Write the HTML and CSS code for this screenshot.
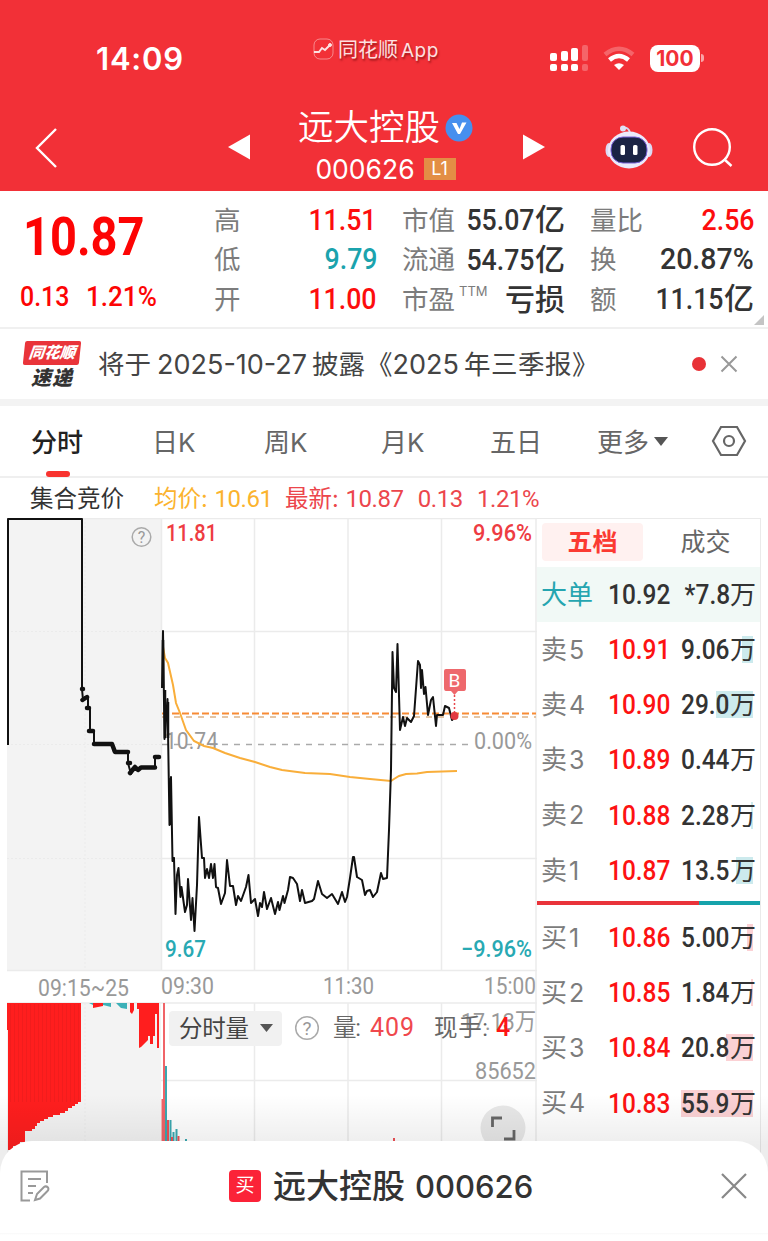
FILE: index.html
```html
<!DOCTYPE html>
<html lang="zh-CN">

<head>
    <meta charset="UTF-8">
    <title>远大控股 000626</title>
    <link rel="stylesheet" href="styles.css">
</head>

<body>
    <header class="top">
        <div class="status">
            <span class="time">14:09</span>
            <span class="mark">
                <svg width="22" height="22" viewBox="0 0 22 22" fill="none" stroke="#fff">
                    <rect x="1" y="1" width="19" height="20" rx="6" stroke-opacity=".5" />
                    <path d="M1 14 L6 14 L9 10 L12 12 L17 7" stroke-width="2" />
                    <circle cx="17" cy="7" r="1.5" fill="#fff" />
                </svg>
                同花顺<b>App</b>
            </span>
            <svg class="signal" width="38" height="28" viewBox="0 0 38 28" fill="#fff">
                <rect x="0" y="9" width="7" height="8" rx="2" />
                <rect x="11" y="7" width="7" height="10" rx="2" />
                <rect x="21" y="4" width="7" height="13" rx="2" />
                <rect x="32" y="1" width="6" height="16" rx="2" opacity=".25" />
                <rect x="0" y="20" width="7" height="7" rx="2" />
                <rect x="11" y="20" width="7" height="7" rx="2" />
                <rect x="21" y="20" width="7" height="7" rx="2" />
                <rect x="32" y="20" width="6" height="7" rx="2" opacity=".25" />
            </svg>
            <svg class="wifi" width="32" height="25" viewBox="0 0 32 25" fill="none" stroke="#fff" stroke-width="4.5">
                <path d="M2 8.5 Q16 -3 30 8.500" opacity=".25" />
                <path d="M6.500 14 Q16 6 25.500 14" />
                <path d="M16 24 L11 19 Q16 15.500 21 19 Z" fill="#fff" stroke="none" />
            </svg>
            <span class="battery">100</span>
            <i class="battery-tip"></i>
        </div>
        <div class="nav">
            <svg class="back" width="22" height="40" viewBox="0 0 22 40" fill="none" stroke="#fff" stroke-width="2.400">
                <path d="M21 1 L2 20 L21 39" />
            </svg>
            <svg class="prev" width="22" height="26" viewBox="0 0 22 26" fill="#fff">
                <path d="M0 13 L22 0.500 V25.500 Z" />
            </svg>
            <div class="title">
                <div class="name">远大控股
                    <svg width="28" height="28" viewBox="0 0 28 28">
                        <circle cx="14" cy="14" r="13.500" fill="#468fee" />
                        <path d="M7 9 H11.500 L14.500 15 L17 8.500 H21.500 L15 20 H13 Z" fill="#fff" />
                    </svg>
                </div>
                <div class="code">000626<span class="level">L1</span></div>
            </div>
            <svg class="next" width="22" height="26" viewBox="0 0 22 26" fill="#fff">
                <path d="M22 13 L0 0.500 V25.500 Z" />
            </svg>
            <svg class="robot" width="48" height="44" viewBox="0 0 48 44">
                <path d="M18 3 Q24 2 25 8" fill="none" stroke="#d9d8ee" stroke-width="2" />
                <circle cx="18" cy="3.500" r="3" fill="#dfe2f5" />
                <ellipse cx="4" cy="25" rx="3.500" ry="7" fill="#dcdaf4" />
                <ellipse cx="44" cy="25" rx="3.500" ry="7" fill="#dcdaf4" />
                <ellipse cx="24" cy="25" rx="21" ry="18.500" fill="#eceafb" />
                <rect x="6" y="12" width="36" height="26" rx="12" fill="#1b2344" stroke="#7a62d8" stroke-width="1" />
                <rect x="15.500" y="20" width="4.500" height="10" rx="1.500" fill="#fff" />
                <rect x="28" y="20" width="4.500" height="10" rx="1.500" fill="#fff" />
            </svg>
            <svg class="search" width="40" height="40" viewBox="0 0 40 40" fill="none" stroke="#fff" stroke-width="2.400">
                <circle cx="19" cy="19" r="17.800" />
                <path d="M31 31 L38.500 38" />
            </svg>
        </div>
    </header>

    <section class="quote">
        <div class="last">
            <div class="price"><span class="num">10.87</span></div>
            <div class="change"><span class="num">0.13</span><span class="num">1.21%</span></div>
        </div>
        <div class="stats">
            <div class="stat"><label>高</label><span class="num red">11.51</span></div>
            <div class="stat"><label>市值</label><span class="val"><span class="num">55.07</span>亿</span></div>
            <div class="stat"><label>量比</label><span class="num red">2.56</span></div>
            <div class="stat"><label>低</label><span class="num teal">9.79</span></div>
            <div class="stat"><label>流通</label><span class="val"><span class="num">54.75</span>亿</span></div>
            <div class="stat"><label>换</label><span class="num wide">20.87%</span></div>
            <div class="stat"><label>开</label><span class="num red">11.00</span></div>
            <div class="stat"><label>市盈<sup>TTM</sup></label><span class="val loss">亏损</span></div>
            <div class="stat"><label>额</label><span class="val"><span class="num">11.15</span>亿</span></div>
        </div>
        <i class="corner"></i>
    </section>

    <section class="notice">
        <div class="logo"><span class="logo-top">同花顺</span><span class="logo-bottom">速递</span></div>
        <p>将于<b class="date">2025-10-27</b>披露<span class="open">《</span><b>2025</b><span class="year">年三季报</span>》</p>
        <i class="dot"></i>
        <svg width="18" height="18" viewBox="0 0 18 18" stroke="#999" stroke-width="2">
            <path d="M1.500 1.500 L16.500 16.500 M16.500 1.500 L1.500 16.500" />
        </svg>
    </section>

    <nav class="tabs">
        <span class="active">分时</span>
        <span>日K</span>
        <span>周K</span>
        <span>月K</span>
        <span>五日</span>
        <span>更多<i class="caret"></i></span>
        <svg width="36" height="32" viewBox="0 0 36 32" fill="none" stroke="#666" stroke-width="2.200">
            <path d="M10 2 H26 L34 16 L26 30 H10 L2 16 Z" />
            <circle cx="18" cy="16" r="5" />
        </svg>
    </nav>

    <div class="info">
        <span class="auction">集合竞价</span>
        <span class="avg">均价: <b>10.61</b></span>
        <span class="now">最新: <b>10.87</b></span>
        <span class="now"><b>0.13</b></span>
        <span class="now"><b>1.21%</b></span>
    </div>

    <main class="board">
        <svg class="chart" width="537" height="723" viewBox="0 518 537 723">
            <!-- auction background -->
            <rect x="7" y="518" width="154" height="452" fill="#f3f3f3" />
            <rect x="7" y="1003" width="154" height="150" fill="#f3f3f3" />

            <!-- grid -->
            <g stroke="#ebebeb" stroke-width="1.500" fill="none">
                <path d="M7 518.500 H537 M161 631.500 H537 M161 858.500 H537 M7 970.500 H537 M7 1003 H537 M161 1080.500 H537" />
                <path d="M161.500 518 V970 M254.500 518 V970 M348 518 V970 M441.500 518 V970 M536 518 V1153" />
                <path d="M254.500 1003 V1153 M348 1003 V1153 M441.500 1003 V1153" />
                <path d="M7 631.500 H161 M7 744.500 H161 M7 858.500 H161 M85 518 V970 M85 1003 V1153" stroke-dasharray="2 2" stroke-width="1" />
            </g>

            <!-- auction line -->
            <path class="line" d="M8 745 V519 H82 V689 L83 700 L85 697 L88 698 V708 H90 V731 H94 V744 H112 L114 752 H128 V763 L131 774 L135 767 L138 770 L140 767 H155 V757 H160" />
            <path class="line thick" d="M82 689 H83 M82.500 700 L87 697 M87 708 H89 M89 731 H93 M94 744 H112 L115 752 H128 M128 763 H130 M130 773 L135 767 L138 770 L141 767.500 H155 M155 757 H159" />

            <!-- reference levels -->
            <path d="M162 744.500 H470" stroke="#aaa" stroke-width="1.500" stroke-dasharray="6 6" />
            <path d="M162 717 H536" stroke="#dcb288" stroke-width="1.500" stroke-dasharray="6 6" />
            <path d="M162 713.500 H536" stroke="#f88b35" stroke-width="2" stroke-dasharray="7 3" />

            <text class="din grey" x="165" y="749" textLength="53" lengthAdjust="spacingAndGlyphs">10.74</text>
            <text class="din grey" x="474" y="749" textLength="58" lengthAdjust="spacingAndGlyphs">0.00%</text>

            <path d="M163 647 L165 658 L168 663 L173 685 L176 703 L180 713 L186 730 L194 741 L204 746 L213 748 L225 753 L240 758 L255 762 L270 767 L282 770 L305 773 L330 774 L350 777 L370 779 L391 781 L394 779 L399 776 L406 774 L417 773.500 L427 772 L457 771" fill="none" stroke="#f9ae3a" stroke-width="2" />
            <path class="line" d="M162 688 L163 631 L164.500 739 L167.500 699 L169.500 825 L171 777 L172.500 861 L174 858 L175.500 914 L177 875 L178.500 868 L180.500 897 L181.500 887 L185 912 L187 905 L188 879 L191 920 L192.500 898 L194.500 931 L197 885 L199 817 L202 858 L204 858 L205 878 L207 869 L209 878 L211 864 L213 878 L214.500 864 L216 887 L218 888 L221 904 L225 893 L227 860 L230 886 L233 886 L236 905 L238 896 L241 901 L246 887 L248.500 875 L251 903 L255 899 L258 916 L260 903 L262 907 L264 892 L267 909 L271 898 L275 914 L278 902 L279.500 910 L283 896 L284.500 903 L288 890 L290 877 L293 878 L297 884 L300 901 L302 890 L305 903 L312 901 L314 899 L318 881 L322 894 L327 898 L332 894 L338 904 L342 892 L345 902 L347 897 L350 878 L353 857 L354 857 L357 877 L362 880 L365 895 L367 891 L370 890 L373 897 L377 892 L381 873 L383 879 L387 878 L389 830 L391 770 L392.500 652 L394 688 L396 692 L397.500 644 L400 730 L403 717 L405 726 L407 718 L411 722 L414 716 L418 661 L420 665 L421 688 L422 670 L424 694 L425.500 687 L428 715 L431 700 L433 697 L436 726 L437 715 L443 715 L445 706 L449 708 L452 720 L455 717" />
            <path d="M163 640 V688 M165 690 V738 M168 702 V738 M170.500 778 V825" stroke="#111" stroke-width="2.500" />

            <!-- buy marker -->
            <path d="M454.500 691 V714" stroke="#e8474d" stroke-width="1.500" stroke-dasharray="2 2" />
            <path d="M446 669 H464 Q466 669 466 671 V688 Q466 691 464 691 H458 L454.500 695 L451 691 H446 Q444 691 444 688 V671 Q444 669 446 669 Z" fill="#ee686c" />
            <text x="454.500" y="687" fill="#fff" font-size="19" text-anchor="middle">B</text>
            <circle cx="454.500" cy="716" r="4" fill="#e2383f" />

            <!-- price labels -->
            <text class="din rise" x="166" y="541" textLength="51" lengthAdjust="spacingAndGlyphs">11.81</text>
            <text class="din rise" x="473" y="541" textLength="59" lengthAdjust="spacingAndGlyphs">9.96%</text>
            <text class="din fall" x="165" y="957" textLength="41" lengthAdjust="spacingAndGlyphs">9.67</text>
            <text class="din fall" x="461" y="957" textLength="71" lengthAdjust="spacingAndGlyphs">−9.96%</text>
            <g fill="none" stroke="#aaa" stroke-width="1.500">
                <circle cx="141.500" cy="537" r="9.300" />
                <circle cx="307" cy="1028" r="11.300" />
            </g>
            <text x="141.500" y="543" fill="#999" font-size="16" text-anchor="middle">?</text>
            <text x="307" y="1035" fill="#999" font-size="19" text-anchor="middle">?</text>

            <!-- time axis -->
            <text class="din axis" x="38" y="996" textLength="91" lengthAdjust="spacingAndGlyphs">09:15~25</text>
            <text class="din axis" x="161" y="994" textLength="53" lengthAdjust="spacingAndGlyphs">09:30</text>
            <text class="din axis" x="323" y="994" textLength="51" lengthAdjust="spacingAndGlyphs">11:30</text>
            <text class="din axis" x="484" y="994" textLength="52" lengthAdjust="spacingAndGlyphs">15:00</text>

            <!-- volume -->
            <path d="M7 1003 H81 V1102 H78 V1104 H75 V1106 H72 V1108 H68 V1111 H65 V1113 H60 V1115 H53 V1117 H48 V1119 H44 V1121 H40 V1123 H37 V1126 H35 V1129 H32 V1131 H25 V1142 H20 V1146 H13 V1150 H8 V1030 H7 Z" fill="#ff1e1e" />
            <path d="M10 1053 H80" stroke="#e01c1c" stroke-opacity=".45" stroke-width="98" stroke-dasharray="1 3" />
            <path d="M93 1003 H103 V1006 L93 1008 Z M130 1003 H134 V1010 L132 1014 L130 1012 Z M137 1003 H159 V1048 H157 V1014 H155 V1036 H153 V1044 H150 V1036 H148 V1040 L141 1047 L139 1048 V1009 H137 Z" fill="#ff1e1e" />
            <path d="M89 1003 H93 V1005 Z M103 1003 H111 V1007 L103 1005 Z M116 1003 H127 V1009 L121 1008 Z" fill="#3cb1b8" />
            <path d="M164 1003 V1141 M162.500 1099 V1141" stroke="#f06468" stroke-width="2" />
            <path d="M166 1066 V1141 M170.500 1120 V1141 M173.500 1132 V1141 M176.500 1129 V1141 M186 1139 V1141" stroke="#3aa8b0" stroke-width="2" />
            <path d="M168 1120 V1141 M172 1137 V1141 M178.500 1136 V1141 M394 1138 V1141" stroke="#ee5055" stroke-width="2" />

            <!-- volume legend -->
            <rect x="169" y="1011" width="113" height="35" rx="4" fill="#f1f1f1" />
            <text class="cjk" x="179" y="1037" fill="#444" textLength="70">分时量</text>
            <path d="M260 1024 H273 L266.500 1032 Z" fill="#555" />
            <text class="cjk" x="333" y="1036" fill="#666" textLength="28">量:</text>
            <text x="370" y="1036" class="count" textLength="44">409</text>
            <text class="cjk" x="461" y="1030" fill="#999" textLength="75" lengthAdjust="spacingAndGlyphs">17.13万</text>
            <text class="cjk" x="434" y="1036" fill="#666" textLength="54">现手:</text>
            <text x="496" y="1036" class="count strong">4</text>
            <text class="din axis" x="475" y="1079" textLength="61" lengthAdjust="spacingAndGlyphs">85652</text>
            <circle cx="503" cy="1128" r="22.500" fill="#e8e8e8" />
            <path d="M492.500 1127 V1118 H502 M514 1130 V1139 H504" fill="none" stroke="#666" stroke-width="2.800" />
        </svg>

        <section class="book">
            <div class="book-tabs"><span class="on">五档</span><span>成交</span></div>
            <div class="row large"><span class="side">大单</span><span class="num">10.92</span><span class="amt"><span class="num">*7.8</span>万</span></div>
            <div class="row"><span class="side">卖<b>5</b></span><span class="num">10.91</span><span class="amt"><i style="width:11px"></i><span class="num">9.06</span>万</span></div>
            <div class="row"><span class="side">卖<b>4</b></span><span class="num">10.90</span><span class="amt"><i style="width:37px"></i><span class="num">29.0</span>万</span></div>
            <div class="row"><span class="side">卖<b>3</b></span><span class="num">10.89</span><span class="amt"><span class="num">0.44</span>万</span></div>
            <div class="row"><span class="side">卖<b>2</b></span><span class="num">10.88</span><span class="amt"><i style="width:2px"></i><span class="num">2.28</span>万</span></div>
            <div class="row"><span class="side">卖<b>1</b></span><span class="num">10.87</span><span class="amt"><i style="width:17px"></i><span class="num">13.5</span>万</span></div>
            <div class="ratio"></div>
            <div class="row buy"><span class="side">买<b>1</b></span><span class="num">10.86</span><span class="amt"><i style="width:6px"></i><span class="num">5.00</span>万</span></div>
            <div class="row buy"><span class="side">买<b>2</b></span><span class="num">10.85</span><span class="amt"><i style="width:2px"></i><span class="num">1.84</span>万</span></div>
            <div class="row buy"><span class="side">买<b>3</b></span><span class="num">10.84</span><span class="amt"><i style="width:27px"></i><span class="num">20.8</span>万</span></div>
            <div class="row buy"><span class="side">买<b>4</b></span><span class="num">10.83</span><span class="amt"><i style="width:72px"></i><span class="num">55.9</span>万</span></div>
        </section>
    </main>

    <div class="fade"></div>
    <footer class="sheet">
        <svg class="note" width="30" height="32" viewBox="0 0 30 32" fill="none" stroke="#999" stroke-width="2">
            <path d="M27 13 V1.500 H1.500 V30.500 H10 M8 9 H21 M8 16 H16 M8 23 H13" />
            <path d="M15 30 L17 24 L24 17 Q26 15.500 28 17.500 Q29 19.500 27.500 21 L20 28.500 Z" />
        </svg>
        <span class="tag">买</span>
        <span class="stock">远大控股</span><b>000626</b>
        <svg class="close" width="28" height="28" viewBox="0 0 28 28" stroke="#888" stroke-width="2.200">
            <path d="M2 2 L26 26 M26 2 L2 26" />
        </svg>
    </footer>
</body>

</html>
```

FILE: styles.css
```css
* {
    box-sizing: border-box;
}

body {
    margin: 0;
    width: 768px;
    height: 1241px;
    overflow: hidden;
    position: relative;
    background: #fff;
    color: #333;
    font-family: Inter, "Noto Sans CJK SC", sans-serif;
    font-size: 26px;
    line-height: 1;
}

svg {
    display: block;
    flex: none;
}

i {
    font-style: normal;
}

/* narrow figures */
.num {
    display: inline-block;
    font-family: Roboto, sans-serif;
    font-weight: 500;
    transform: scaleX(.89);
    transform-origin: right;
}

.red {
    color: #fd0d0d;
}

.teal {
    color: #1ba3ad;
}

/* header */
.top {
    height: 191px;
    background: #f23037;
    color: #fff;
}

.status {
    height: 104px;
    padding: 12px 0 0 96px;
    display: flex;
    align-items: center;
}

.time {
    width: 217px;
    font-size: 31px;
    font-weight: 600;
    letter-spacing: .8px;
}

.mark {
    width: 237px;
    margin-top: -16px;
    display: flex;
    align-items: center;
    gap: 3px;
    font-size: 20px;
    opacity: .85;
    text-shadow: 1px 2px 2px rgba(80, 0, 0, .6);
}

.mark svg {
    margin-top: -3px;
}

.mark b {
    font-size: 19px;
    font-weight: 400;
    letter-spacing: .5px;
}

.wifi {
    margin-left: 15px;
}

.battery {
    margin-left: 15px;
    width: 50px;
    height: 27px;
    border-radius: 8px;
    background: #fff;
    color: #f23037;
    font-size: 21px;
    font-weight: 700;
    line-height: 27px;
    text-align: center;
}

.battery-tip {
    width: 3px;
    height: 8px;
    margin-left: 1px;
    border-radius: 0 3px 3px 0;
    background: #f9a5a8;
}

.nav {
    height: 87px;
    padding-left: 35px;
    display: flex;
    align-items: center;
}

.prev {
    margin-left: 171px;
    margin-top: -2px;
}

.next {
    margin-top: -2px;
}

.title {
    width: 175px;
    margin: -3px 50px 0 48px;
    display: flex;
    flex-direction: column;
    align-items: center;
    gap: 10px;
}

.name {
    display: flex;
    align-items: center;
    gap: 5px;
    font-size: 35.500px;
    font-weight: 350;
    line-height: 36px;
    white-space: nowrap;
}

.code {
    display: flex;
    align-items: center;
    gap: 9px;
    font-size: 26.500px;
}

.level {
    width: 32px;
    height: 22px;
    background: #e38e45;
    font-size: 18px;
    line-height: 22px;
    text-align: center;
}

.robot {
    margin-left: 60px;
    margin-top: -2px;
}

.search {
    margin-left: 40px;
}

/* quote */
.quote {
    position: relative;
    height: 138px;
    display: flex;
    border-bottom: 2px solid #f0f0f0;
}

.last {
    width: 214px;
    padding-top: 18px;
    color: #fd0404;
}

.last .num {
    transform-origin: left;
}

.price {
    padding-left: 23px;
    font-size: 54px;
}

.price .num {
    font-weight: 700;
    transform: scaleX(.87);
}

.change {
    display: flex;
    padding: 19px 0 0 20px;
    font-size: 28px;
}

.change .num:first-child {
    width: 66px;
}

.change .num:last-child {
    transform: scaleX(.93);
}

.stats {
    display: grid;
    grid-template-columns: 163px 163px 164px;
    grid-auto-rows: 39.500px;
    column-gap: 25px;
    padding-top: 9px;
}

.stat {
    display: flex;
    justify-content: space-between;
    align-items: center;
}

.stat label {
    color: #7c7c7c;
    font-size: 26.500px;
    font-weight: 400;
    white-space: nowrap;
}

.stat .num {
    font-size: 30px;
}

.stat .wide {
    transform: scaleX(.95);
}

.val {
    font-size: 30px;
    font-weight: 500;
    white-space: nowrap;
}

.stat sup {
    display: inline-block;
    margin-left: 4px;
    font-size: 13px;
    line-height: 1;
    vertical-align: 13px;
}

.corner {
    position: absolute;
    right: 4px;
    bottom: 2px;
    border: 5px solid;
    border-color: transparent #c4c4c4 #c4c4c4 transparent;
}

/* notice */
.notice {
    height: 70px;
    padding-left: 24px;
    display: flex;
    align-items: center;
}

.logo {
    width: 74px;
    font-style: italic;
    font-weight: 900;
}

.logo span {
    display: block;
    width: 56px;
    text-align: center;
}

.logo .logo-top {
    height: 24px;
    background: #e9343a;
    border-radius: 2px;
    color: #fff;
    font-size: 15.500px;
    line-height: 23px;
    transform: skewX(-6deg);
}

.logo .logo-bottom {
    padding-top: 3px;
    font-size: 20px;
    line-height: 20px;
    letter-spacing: 1px;
}

.notice p {
    width: 594px;
    margin: 0;
    color: #444;
    font-size: 26.500px;
    white-space: nowrap;
}

.notice p b {
    font-size: 27px;
    font-weight: 400;
}

.notice .date {
    margin: 0 5px 0 6px;
}

.notice .open {
    margin-left: 1px;
}

.notice .year {
    margin-left: 5px;
    letter-spacing: .5px;
}

.dot {
    width: 14px;
    height: 14px;
    margin-right: 14px;
    border-radius: 50%;
    background: #e83237;
}

/* period tabs */
.tabs {
    height: 79px;
    padding-left: 31px;
    border-top: 7px solid #f3f3f3;
    border-bottom: 2px solid #efefef;
    display: grid;
    grid-template-columns: 121px 112px 117px 109px 107px 114px 1fr;
    align-items: center;
    color: #666;
}

.tabs span {
    display: flex;
    align-items: center;
    height: 70px;
    padding-top: 4px;
}

.tabs .active {
    position: relative;
    color: #222;
    font-weight: 500;
}

.tabs .active::after {
    content: "";
    position: absolute;
    left: 15px;
    bottom: -1px;
    width: 24px;
    height: 6px;
    border-radius: 3px;
    background: #f8332f;
}

.caret {
    margin: -3px 0 0 5px;
    border: 7px solid transparent;
    border-top: 9px solid #555;
    border-bottom: 0;
}

.info {
    height: 40px;
    padding: 2px 0 0 30px;
    display: flex;
    align-items: center;
    font-size: 23.500px;
    white-space: nowrap;
}

.info b {
    font-family: Roboto, sans-serif;
    font-size: 24px;
    font-weight: 400;
    letter-spacing: -.4px;
}

.auction {
    width: 124px;
}

.avg {
    width: 131px;
    color: #fbb32e;
}

.now {
    margin-right: 14px;
    color: #ec464c;
}

/* chart */
.board {
    display: flex;
}

.chart {
    font-family: Roboto, "Noto Sans CJK SC", sans-serif;
}

.line {
    fill: none;
    stroke: #111;
    stroke-width: 2;
    stroke-linejoin: round;
}

.thick {
    stroke-width: 4.500;
    stroke-linecap: round;
}

.din {
    font-size: 24px;
}

.grey,
.axis {
    fill: #999;
}

.rise {
    fill: #ee3c42;
    font-weight: 500;
}

.fall {
    fill: #28a9b3;
    font-weight: 500;
}

.cjk {
    font-size: 23.500px;
}

.count {
    fill: #f0484d;
    font-size: 25px;
}

.strong {
    fill: #fd1515;
    font-weight: 500;
}

/* order book */
.book {
    width: 224px;
    height: 723px;
    border-top: 1px solid #eaeaea;
    border-right: 1px solid #eaeaea;
}

.book-tabs {
    display: flex;
    height: 48px;
    padding: 4px 0 0 5px;
    color: #666;
    font-size: 25px;
    line-height: 38px;
}

.book-tabs span {
    flex: none;
    width: 101px;
    height: 38px;
    margin-right: 12px;
    text-align: center;
}

.book-tabs .on {
    border-radius: 4px;
    background: #fff1f0;
    color: #fb3a32;
    font-weight: 700;
}

.row {
    height: 55.200px;
    padding: 0 4px;
    display: flex;
    align-items: center;
    font-size: 26px;
}

.row .side {
    width: 67px;
    color: #7c7c7c;
    font-weight: 400;
}

.row .side b {
    margin-left: 2px;
    font-size: 25px;
    font-weight: 400;
}

.row .num {
    font-size: 27.500px;
}

.row > .num {
    width: 62px;
    color: #fd1212;
    transform-origin: left;
}

.row .amt {
    position: relative;
    z-index: 0;
    margin-left: auto;
    white-space: nowrap;
}

/* size bar behind the amount */
.row .amt i {
    position: absolute;
    z-index: -1;
    right: 3px;
    top: 0;
    height: 27px;
    background: #cceaed;
}

.row.buy .amt i {
    background: #fbd1d4;
}

.row.large {
    background: #f1f9f6;
}

.row.large .side {
    color: #25a5b0;
}

.row.large > .num {
    color: #333;
}

.ratio {
    height: 4px;
    margin: 3px 0 5px;
    background: linear-gradient(90deg, #e9333a 162px, #16a3ab 162px);
}

/* bottom sheet */
.fade {
    position: absolute;
    left: 0;
    top: 1095px;
    width: 768px;
    height: 90px;
    background: linear-gradient(rgba(0, 0, 0, 0), rgba(0, 0, 0, .07) 50px);
}

.sheet {
    position: absolute;
    left: 0;
    bottom: 0;
    width: 768px;
    height: 100px;
    padding: 0 20px 10px;
    border-radius: 32px 32px 0 0;
    background: linear-gradient(#fff 92px, #f8f8f8 92px, #fff 94px);
    display: flex;
    align-items: center;
    color: #333;
    font-size: 33px;
    font-weight: 500;
}

.tag {
    width: 32px;
    height: 32px;
    margin: 0 12px 0 179px;
    border-radius: 4px;
    background: #fb2338;
    color: #fff;
    font-size: 19px;
    font-weight: 400;
    line-height: 32px;
    text-align: center;
}

.sheet b {
    margin-left: 10px;
    font-size: 31px;
    font-weight: 500;
}

.close {
    margin-left: auto;
}
```
